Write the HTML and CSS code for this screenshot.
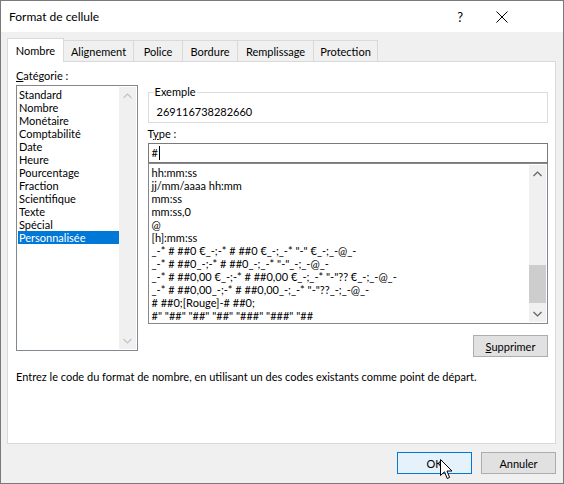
FILE: index.html
```html
<!DOCTYPE html>
<html lang="fr">
<head>
<meta charset="utf-8">
<title>Format de cellule</title>
<link rel="stylesheet" href="styles.css">
</head>
<body>
<div class="window">
  <div class="titlebar">
    <span class="title">Format de cellule</span>
    <span class="help">?</span>
    <svg class="close" width="12" height="12" viewBox="0 0 12 12"><path d="M0.5 0.5 L11.5 11.5 M11.5 0.5 L0.5 11.5" stroke="#000" stroke-width="1" fill="none"/></svg>
  </div>
  <div class="body">
    <div class="tabs">
      <div class="tab selected w-nombre">Nombre</div>
      <div class="tab w-align">Alignement</div>
      <div class="tab w-police">Police</div>
      <div class="tab w-bordure">Bordure</div>
      <div class="tab w-rempl">Remplissage</div>
      <div class="tab w-prot">Protection</div>
    </div>
    <div class="panel">
      <div class="columns">
        <div class="left">
          <div class="label"><u>C</u>atégorie :</div>
          <div class="listbox cat">
            <div class="items">
              <div class="item">Standard</div>
              <div class="item">Nombre</div>
              <div class="item">Monétaire</div>
              <div class="item">Comptabilité</div>
              <div class="item">Date</div>
              <div class="item">Heure</div>
              <div class="item">Pourcentage</div>
              <div class="item">Fraction</div>
              <div class="item">Scientifique</div>
              <div class="item">Texte</div>
              <div class="item">Spécial</div>
              <div class="item sel">Personnalisée</div>
            </div>
            <div class="scrollbar disabled">
              <svg class="arrow" width="9" height="6" viewBox="0 0 9 6"><path d="M0.5 5 L4.5 1 L8.5 5" stroke="#c4c4c4" stroke-width="1.2" fill="none"/></svg>
              <div class="track"></div>
              <svg class="arrow" width="9" height="6" viewBox="0 0 9 6"><path d="M0.5 1 L4.5 5 L8.5 1" stroke="#c4c4c4" stroke-width="1.2" fill="none"/></svg>
            </div>
          </div>
        </div>
        <div class="right">
          <fieldset class="example">
            <legend>Exemple</legend>
            <div class="exvalue">269116738282660</div>
          </fieldset>
          <div class="label type-label">T<u>y</u>pe :</div>
          <div class="input">#<span class="caret"></span></div>
          <div class="listbox fmt">
            <div class="items">
              <div class="item">hh:mm:ss</div>
              <div class="item">jj/mm/aaaa hh:mm</div>
              <div class="item">mm:ss</div>
              <div class="item">mm:ss,0</div>
              <div class="item">@</div>
              <div class="item">[h]:mm:ss</div>
              <div class="item">_-* # ##0 €_-;-* # ##0 €_-;_-* "-" €_-;_-@_-</div>
              <div class="item">_-* # ##0_-;-* # ##0_-;_-* "-"_-;_-@_-</div>
              <div class="item">_-* # ##0,00 €_-;-* # ##0,00 €_-;_-* "-"?? €_-;_-@_-</div>
              <div class="item">_-* # ##0,00_-;-* # ##0,00_-;_-* "-"??_-;_-@_-</div>
              <div class="item"># ##0;[Rouge]-# ##0;</div>
              <div class="item">#" "##" "##" "##" "###" "###" "##</div>
            </div>
            <div class="scrollbar">
              <svg class="arrow" width="9" height="6" viewBox="0 0 9 6"><path d="M0.5 5 L4.5 1 L8.5 5" stroke="#606060" stroke-width="1.2" fill="none"/></svg>
              <div class="track"><div class="thumb"></div></div>
              <svg class="arrow" width="9" height="6" viewBox="0 0 9 6"><path d="M0.5 1 L4.5 5 L8.5 1" stroke="#606060" stroke-width="1.2" fill="none"/></svg>
            </div>
          </div>
          <div class="btnrow">
            <button class="btn"><u>S</u>upprimer</button>
          </div>
        </div>
      </div>
      <p class="desc">Entrez le code du format de nombre, en utilisant un des codes existants comme point de départ.</p>
    </div>
    <div class="footer">
      <button class="btn default">OK</button>
      <button class="btn">Annuler</button>
    </div>
  </div>
  <svg class="cursor" width="13" height="21" viewBox="0 0 13 21"><path d="M0.5 0.5 L0.5 16.5 L4.5 12.8 L7.2 19.5 L9.6 18.5 L7 12 L12 12 Z" fill="#fff" stroke="#000" stroke-width="1"/></svg>
</div>
</body>
</html>
```
FILE: styles.css
```css
* { box-sizing: border-box; }
html, body { margin: 0; padding: 0; background: #fff; }
body {
  font-family: "Lato", "Open Sans", "Liberation Sans", sans-serif;
  font-size: 11px;
  color: #000;
}
.window {
  position: relative;
  width: 564px;
  height: 484px;
  border: 1px solid #7a7a7a;
  display: flex;
  flex-direction: column;
  overflow: hidden;
}
.titlebar {
  height: 31px;
  background: #fff;
  display: flex;
  align-items: center;
  padding-left: 8px;
  flex-shrink: 0;
}
.title { font-size: 12px; flex: 1; }
.help { font-size: 13px; margin-right: 33px; }
.close { margin-right: 55px; }
.body {
  flex: 1;
  background: #f0f0f0;
  padding: 6px 7px 0 6px;
  display: flex;
  flex-direction: column;
}
.tabs {
  display: flex;
  align-items: flex-end;
  height: 23px;
  position: relative;
  z-index: 2;
}
.tab {
  height: 21px;
  border: 1px solid #d9d9d9;
  border-bottom: none;
  border-left: none;
  background: #f0f0f0;
  display: flex;
  align-items: center;
  justify-content: center;
  padding-top: 1px;
}
.tab.selected {
  background: #fff;
  border-left: 1px solid #d9d9d9;
  padding-top: 0;
  padding-bottom: 1px;
  margin-bottom: -1px;
  height: 24px;
}
.w-nombre { width: 57px; }
.w-align { width: 70px; }
.w-police { width: 49px; }
.w-bordure { width: 55px; }
.w-rempl { width: 76px; }
.w-prot { width: 64px; }
.panel {
  width: 549px;
  height: 383px;
  background: #fff;
  border: 1px solid #d9d9d9;
  padding: 6px 7px 0 8px;
  position: relative;
  z-index: 1;
}
.columns {
  display: flex;
  gap: 10px;
}
.left { width: 122px; display: flex; flex-direction: column; }
.right { width: 402px; display: flex; flex-direction: column; padding-top: 17px; }
.label { height: 17px; line-height: 16px; }
.listbox {
  border: 1px solid #828790;
  background: #fff;
  display: flex;
  padding: 1px;
}
.listbox .items { flex: 1; padding-top: 1px; }
.item { height: 13px; line-height: 13px; padding-left: 1px; white-space: nowrap; }
.item.sel { background: #0078d7; color: #fff; }
.cat { height: 266px; }
.scrollbar {
  width: 17px;
  background: #f0f0f0;
  display: flex;
  flex-direction: column;
  align-items: center;
}
.scrollbar .arrow { margin: 6px 0 5px; flex-shrink: 0; }
.scrollbar .track { flex: 1; width: 100%; position: relative; }
.thumb {
  position: absolute;
  left: 0; right: 0;
  top: 83px;
  height: 38px;
  background: #cdcdcd;
}
.example {
  margin: 0;
  padding: 0 0 0 8px;
  border: 1px solid #dcdcdc;
  height: 38px;
}
.example legend {
  padding: 0 1px;
  margin-left: -3px;
  line-height: 14px;
}
.exvalue { padding-top: 6px; }
.type-label { margin-top: 3px; height: 17px; }
.input {
  height: 20px;
  border: 1px solid #7a7a7a;
  padding: 0 3px;
  line-height: 18px;
  display: flex;
  align-items: center;
}
.caret { display: inline-block; width: 1px; height: 14px; background: #000; margin-left: 1px; }
.fmt { height: 161px; }
.fmt .items { padding-left: 1px; }
.btnrow { display: flex; justify-content: flex-end; margin-top: 11px; }
.btn {
  font-family: inherit;
  font-size: 11px;
  color: #000;
  width: 75px;
  height: 22px;
  background: #e1e1e1;
  border: 1px solid #adadad;
  padding: 0;
  margin: 0;
}
.btn.default {
  background: #e5f1fb;
  border: 1px solid #0078d7;
}
.desc { margin: 13px 0 0 0; }
.footer {
  display: flex;
  justify-content: flex-end;
  gap: 9px;
  padding-top: 8px;
  padding-right: 0;
}
.cursor { position: absolute; left: 439px; top: 458px; }
```
